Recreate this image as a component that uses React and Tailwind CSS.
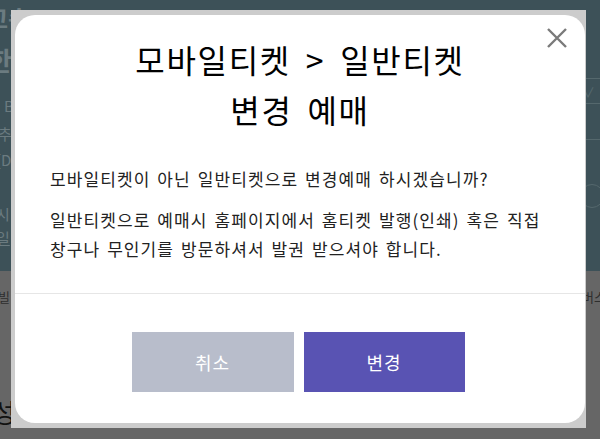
import React from "react";

const font = { fontFamily: '"Noto Sans CJK KR", "Noto Sans", sans-serif' };

// 뒤에 깔린 예매 페이지 (딤 처리된 상태)
const BackPage = () => {
  return (
    <div className="flex flex-col w-full h-full">
      <div className="flex justify-between h-[271px] bg-[#3d5158] overflow-hidden">
        <div className="flex flex-col w-[40px] text-[#6b7b80]">
          <p className="mt-[4px] -ml-[14px] text-[24px] font-bold leading-[28px]">고속</p>
          <p className="mt-[12px] -ml-[12px] text-[26px] font-bold leading-[32px]">한</p>
          <p className="mt-[20px] ml-[4px] text-[15px] leading-[20px]">B</p>
          <p className="mt-[8px] -ml-[2px] text-[15px] leading-[20px]">추</p>
          <p className="mt-[6px] -ml-[4px] text-[15px] leading-[20px]">[D</p>
          <p className="mt-[34px] -ml-[4px] text-[15px] leading-[20px]">시</p>
          <p className="mt-[4px] -ml-[4px] text-[15px] leading-[20px] underline">일</p>
        </div>
        <div className="flex flex-col w-[20px] mt-[78px] text-[#55686d]">
          <div className="h-[26px] border-y border-l border-[#55686d] flex items-center">
            <span className="text-[14px] leading-none">∨</span>
          </div>
          <div className="h-[36px] border-b border-[#55686d]"></div>
          <div className="mt-[44px] w-[24px] h-[24px] rounded-full border border-[#55686d]"></div>
        </div>
      </div>
      <div className="flex justify-between flex-1 bg-[#666666] text-[#2e2e2e]">
        <div className="flex flex-col">
          <p className="mt-[18px] -ml-[2px] text-[13px] leading-[16px]">빌</p>
          <p className="mt-[92px] -ml-[8px] text-[26px] leading-[30px] text-[#111]">성</p>
        </div>
        <p className="mt-[18px] -mr-[6px] text-[13px] leading-[16px]">버스</p>
      </div>
    </div>
  );
};

const CloseIcon = () => (
  <svg width="20" height="20" viewBox="0 0 20 20" fill="none">
    <path d="M1 1 L19 19 M19 1 L1 19" stroke="#7a7a7a" strokeWidth="2.4" />
  </svg>
);

const ChangeModal = () => {
  return (
    <div className="bg-[#cccccc] pl-[4px] pt-[5px] pr-[1px] pb-[5px] w-[575px]">
      <div className="relative flex flex-col bg-white rounded-[20px] h-[408px] text-black">
        {/* 닫기 버튼 */}
        <button className="absolute right-[18px] top-[13px]">
          <CloseIcon />
        </button>

        {/* 제목 */}
        <h2 className="pt-[19px] text-center text-[32px] leading-[50px] font-normal tracking-[1.7px] [word-spacing:6px]">
          모바일티켓 &gt; 일반티켓
          <br />
          변경 예매
        </h2>

        {/* 안내 문구 */}
        <div className="px-[35px] pt-[30px] text-[17px] text-[#222] tracking-[1.1px] [word-spacing:2px]">
          <p className="leading-[29px]">모바일티켓이 아닌 일반티켓으로 변경예매 하시겠습니까?</p>
          <p className="mt-[12px] leading-[29px]">
            일반티켓으로 예매시 홈페이지에서 홈티켓 발행(인쇄) 혹은 직접
            <br />
            창구나 무인기를 방문하셔서 발권 받으셔야 합니다.
          </p>
        </div>

        <div className="mt-auto border-t border-[#e6e6e6] h-[130px] flex justify-center gap-[10px] pt-[38px] pr-[4px]">
          <button className="w-[162px] h-[60px] bg-[#b8bdcb] text-white text-[18px] tracking-[1px]">취소</button>
          <button className="w-[161px] h-[60px] bg-[#5953b3] text-white text-[18px] tracking-[1px]">변경</button>
        </div>
      </div>
    </div>
  );
};

const App = () => {
  return (
    <div className="relative w-[600px] h-[439px] overflow-hidden" style={font}>
      <BackPage />
      {/* 딤 위에 띄운 모달 */}
      <div className="absolute inset-0 pl-[11px] pt-[10px]">
        <ChangeModal />
      </div>
    </div>
  );
};

export default App;
